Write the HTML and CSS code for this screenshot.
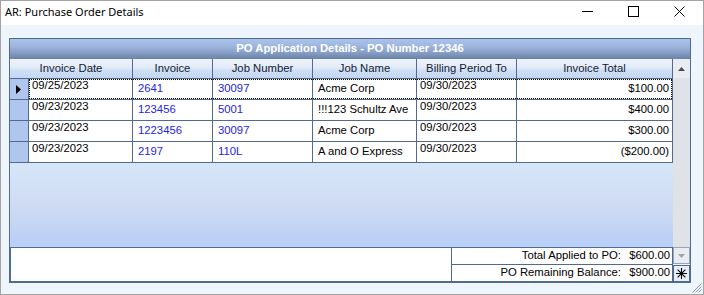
FILE: index.html
```html
<!DOCTYPE html>
<html>
<head>
<meta charset="utf-8">
<title>AR: Purchase Order Details</title>
<link rel="stylesheet" href="styles.css">
</head>
<body>
<div class="window">
  <div class="titlebar">
    <span class="title">AR: Purchase Order Details</span>
    <div class="controls">
      <span class="ctl"><svg width="11" height="11" viewBox="0 0 11 11"><line x1="0" y1="5.5" x2="11" y2="5.5" stroke="#000" stroke-width="1"/></svg></span>
      <span class="ctl"><svg width="11" height="11" viewBox="0 0 11 11"><rect x="0.5" y="0.5" width="10" height="10" fill="none" stroke="#000" stroke-width="1"/></svg></span>
      <span class="ctl"><svg width="11" height="11" viewBox="0 0 11 11"><path d="M0.5 0.5 L10.5 10.5 M10.5 0.5 L0.5 10.5" stroke="#000" stroke-width="1"/></svg></span>
    </div>
  </div>
  <div class="content">
    <div class="grid">
      <div class="caption">PO Application Details - PO Number 12346</div>
      <div class="body">
        <div class="main">
          <div class="hdr">
            <div class="hc">Invoice Date</div>
            <div class="hc">Invoice</div>
            <div class="hc">Job Number</div>
            <div class="hc">Job Name</div>
            <div class="hc">Billing Period To</div>
            <div class="hc">Invoice Total</div>
          </div>
          <div class="row current">
            <div class="rh"><svg width="5" height="9" viewBox="0 0 5 9"><polygon points="0,0 5,4.5 0,9" fill="#000"/></svg></div>
            <div class="cell date">09/25/2023</div>
            <div class="cell link">2641</div>
            <div class="cell link">30097</div>
            <div class="cell">Acme Corp</div>
            <div class="cell date">09/30/2023</div>
            <div class="cell num">$100.00</div>
          </div>
          <div class="row">
            <div class="rh"></div>
            <div class="cell date">09/23/2023</div>
            <div class="cell link">123456</div>
            <div class="cell link">5001</div>
            <div class="cell">!!!123 Schultz Ave</div>
            <div class="cell date">09/30/2023</div>
            <div class="cell num">$400.00</div>
          </div>
          <div class="row">
            <div class="rh"></div>
            <div class="cell date">09/23/2023</div>
            <div class="cell link">1223456</div>
            <div class="cell link">30097</div>
            <div class="cell">Acme Corp</div>
            <div class="cell date">09/30/2023</div>
            <div class="cell num">$300.00</div>
          </div>
          <div class="row">
            <div class="rh"></div>
            <div class="cell date">09/23/2023</div>
            <div class="cell link">2197</div>
            <div class="cell link">110L</div>
            <div class="cell">A and O Express</div>
            <div class="cell date">09/30/2023</div>
            <div class="cell num">($200.00)</div>
          </div>
          <div class="fill"></div>
          <div class="footer">
            <div class="foot-left"></div>
            <div class="totals">
              <div class="trow"><span class="tl">Total Applied to PO:</span><span class="tv">$600.00</span></div>
              <div class="trow"><span class="tl">PO Remaining Balance:</span><span class="tv">$900.00</span></div>
            </div>
          </div>
        </div>
        <div class="vscroll">
          <div class="sb-btn up"><svg width="7" height="4" viewBox="0 0 7 4"><polygon points="0,4 3.5,0 7,4" fill="#4b4b4b"/></svg></div>
          <div class="sb-track"></div>
          <div class="sb-btn down"><svg width="7" height="4" viewBox="0 0 7 4"><polygon points="0,0 3.5,4 7,0" fill="#a3a3a3"/></svg></div>
          <div class="sb-gap"></div>
          <div class="star-btn"><svg width="11" height="11" viewBox="0 0 11 11"><path d="M5.5 0 V11 M0 5.5 H11 M1.6 1.6 L9.4 9.4 M9.4 1.6 L1.6 9.4" stroke="#000" stroke-width="1.1"/></svg></div>
        </div>
      </div>
    </div>
  </div>
  <div class="grip"><svg width="11" height="11" viewBox="0 0 11 11"><path d="M10.5 1.5 L1.5 10.5 M10.5 4.5 L4.5 10.5 M10.5 7.5 L7.5 10.5" stroke="#8f959c" stroke-width="1"/></svg></div>
</div>
</body>
</html>
```

FILE: styles.css
```css
html, body {
  margin: 0;
  padding: 0;
  background: #ffffff;
}

.window {
  position: relative;
  width: 704px;
  height: 295px;
  box-sizing: border-box;
  border: 1px solid #a3a3a3;
  background: #eef5fd;
  display: flex;
  flex-direction: column;
  overflow: hidden;
}

.titlebar {
  height: 24px;
  flex: none;
  background: #ffffff;
  display: flex;
  align-items: center;
  justify-content: space-between;
}

.title {
  font-family: "Noto Sans", "Open Sans", sans-serif;
  font-size: 11px;
  color: #000;
  padding-left: 4px;
  padding-bottom: 3px;
}

.controls {
  display: flex;
  align-items: center;
  padding-bottom: 4px;
  padding-right: 1px;
}

.ctl {
  width: 46px;
  display: flex;
  justify-content: center;
}

.ctl svg {
  display: block;
}

.content {
  flex: 1;
  padding: 13px 0 0 8px;
}

.grid {
  width: 682px;
  height: 245px;
  box-sizing: border-box;
  border: 1px solid #506b8e;
  display: flex;
  flex-direction: column;
  font-family: "Liberation Sans", Arial, sans-serif;
  font-size: 11.3px;
}

.caption {
  height: 20px;
  flex: none;
  line-height: 19px;
  text-align: center;
  font-weight: bold;
  color: #ffffff;
  background: linear-gradient(#abc3ec 0%, #9fb6de 35%, #859dc4 70%, #6b81a5 100%);
}

.body {
  flex: 1;
  display: flex;
}

.main {
  width: 663px;
  display: flex;
  flex-direction: column;
}

.hdr {
  display: grid;
  grid-template-columns: 123px 80px 100px 104px 100px 156px;
  height: 20px;
  flex: none;
  box-sizing: border-box;
  border-bottom: 1px solid #506b8e;
  background: linear-gradient(#eef3fb 0%, #e2ebf8 45%, #cfdff5 60%, #c3d6f2 100%);
}

.hc {
  border-right: 1px solid #506b8e;
  text-align: center;
  line-height: 19px;
  color: #121a33;
  white-space: nowrap;
}

.row {
  position: relative;
  display: grid;
  grid-template-columns: 19px 104px 80px 100px 104px 100px 156px;
  height: 21px;
  flex: none;
}

.row > div {
  box-sizing: border-box;
  border-right: 1px solid #506b8e;
  border-bottom: 1px solid #506b8e;
  background: #ffffff;
  white-space: nowrap;
  overflow: hidden;
}

.row > .rh {
  background: #afc6ee;
  display: flex;
  align-items: center;
  justify-content: center;
  padding-right: 2px;
}

.rh svg {
  display: block;
}

.cell {
  line-height: 13px;
  padding: 3px 0 0 5px;
  color: #000;
}

.cell.date {
  padding: 0 0 0 3px;
}

.cell.link {
  color: #2424e6;
}

.cell.num {
  text-align: right;
  padding: 3px 3px 0 0;
}

.row.current::after {
  content: "";
  position: absolute;
  left: 19px;
  right: 1px;
  top: 0;
  bottom: 1px;
  border: 1px dotted #000;
  pointer-events: none;
}

.fill {
  flex: 1;
  background: linear-gradient(#d7e5f8 0%, #d4e2f7 20%, #cfdbf3 50%, #c4d5f4 75%, #bbd0f6 90%, #bbd0f6 100%);
}

.footer {
  height: 35px;
  flex: none;
  box-sizing: border-box;
  border: 1px solid #506b8e;
  background: #ffffff;
  display: flex;
}

.foot-left {
  width: 441px;
  box-sizing: border-box;
  border-right: 1px solid #506b8e;
}

.totals {
  flex: 1;
  display: flex;
  flex-direction: column;
}

.trow {
  height: 17px;
  box-sizing: border-box;
  display: flex;
  justify-content: flex-end;
  line-height: 14px;
  color: #000;
  white-space: nowrap;
}

.trow + .trow {
  border-top: 1px solid #506b8e;
  height: 17px;
}

.trow:first-child {
  height: 16px;
}

.tl {
  text-align: right;
}

.tv {
  width: 49px;
  text-align: right;
  padding-right: 2px;
}

.vscroll {
  width: 17px;
  display: flex;
  flex-direction: column;
  background: #dfe2e7;
}

.sb-btn {
  display: flex;
  align-items: center;
  justify-content: center;
  background: #e9ecf0;
  box-sizing: border-box;
}

.sb-btn svg {
  display: block;
}

.sb-btn.up {
  height: 19px;
  flex: none;
}

.sb-track {
  flex: 1;
  background: #dfe2e7;
}

.sb-btn.down {
  height: 17px;
  flex: none;
  border: 1px solid #9aa6b6;
}

.sb-gap {
  height: 1px;
  flex: none;
  background: #eef5fd;
}

.star-btn {
  height: 17px;
  flex: none;
  box-sizing: border-box;
  border: 1px solid #506b8e;
  background: #e7eef9;
  display: flex;
  align-items: center;
  justify-content: center;
}

.star-btn svg {
  display: block;
}

.grip {
  position: absolute;
  right: 1px;
  bottom: 1px;
  width: 11px;
  height: 11px;
}

.grip svg {
  display: block;
}
```
